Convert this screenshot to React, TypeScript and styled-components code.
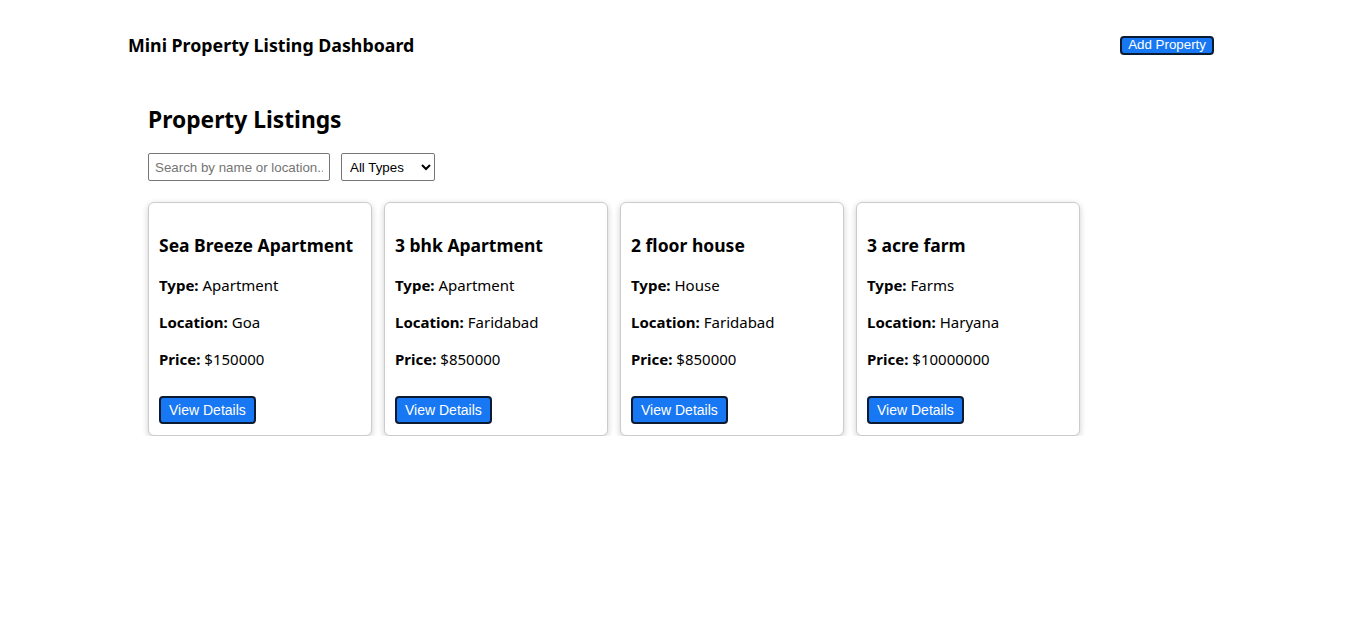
import React from 'react'
import styled, { createGlobalStyle } from 'styled-components'

const GlobalStyle = createGlobalStyle`
body {
    margin: 8px;
    background: #fff;
    color: #000;
    font-family: "Noto Sans", "Open Sans", sans-serif;
}
`

const properties = [
    { id: 1, name: 'Sea Breeze Apartment', type: 'Apartment', location: 'Goa', price: 150000 },
    { id: 2, name: '3 bhk Apartment', type: 'Apartment', location: 'Faridabad', price: 850000 },
    { id: 3, name: '2 floor house', type: 'House', location: 'Faridabad', price: 850000 },
    { id: 4, name: '3 acre farm', type: 'Farms', location: 'Haryana', price: 10000000 },
]

const App = () => {
    const [search, setSearch] = React.useState('')
    const [type, setType] = React.useState('')

    const list = properties.filter(p =>
        (p.name + ' ' + p.location).toLowerCase().includes(search.toLowerCase()) &&
        (type === '' || p.type === type)
    )

    return (
        <>
            <GlobalStyle />
            <Header>
                <Brand>Mini Property Listing Dashboard</Brand>
                <AddButton>Add Property</AddButton>
            </Header>

            <Main>
                <PageTitle>Property Listings</PageTitle>

                <Filters>
                    <SearchInput
                        placeholder="Search by name or location..."
                        value={search}
                        onChange={e => setSearch(e.target.value)}
                    />
                    <TypeSelect value={type} onChange={e => setType(e.target.value)}>
                        <option value="">All Types</option>
                        <option value="Apartment">Apartment</option>
                        <option value="House">House</option>
                        <option value="Farms">Farms</option>
                    </TypeSelect>
                </Filters>

                <CardList>
                    {list.map(p => (
                        <Card key={p.id}>
                            <CardTitle>{p.name}</CardTitle>
                            <Field><b>Type:</b> {p.type}</Field>
                            <Field><b>Location:</b> {p.location}</Field>
                            <Field><b>Price:</b> ${p.price}</Field>
                            <DetailsButton>View Details</DetailsButton>
                        </Card>
                    ))}
                </CardList>
            </Main>
        </>
    )
}
export default App

const Header = styled.header`
margin: 0 123px 0 120px;
padding: 23px 0 20px;
display: flex;
align-items: center;
justify-content: space-between;
`

const Brand = styled.h1`
margin: 0;
font-size: 17.8px;
font-weight: 700;
line-height: 28px;
`

const AddButton = styled.button`
background: #1877f2;
color: #fff;
border: 2px solid #0d1b30;
border-radius: 4px;
padding: 0 6px 2px;
font-family: "Liberation Sans", Arial, sans-serif;
font-size: 13.33px;
line-height: 13px;
cursor: pointer;
`

const Main = styled.main`
margin: 0 120px;
padding: 0 20px;
`

const PageTitle = styled.h2`
margin: 24px 0 17px;
font-size: 22.8px;
font-weight: 700;
line-height: 33px;
`

const Filters = styled.div`
display: flex;
gap: 11px;
margin-bottom: 21px;
`

const SearchInput = styled.input`
width: 182px;
height: 28px;
box-sizing: border-box;
padding: 4px 6px;
border: 1px solid #767676;
border-radius: 2px;
font-family: "Liberation Sans", Arial, sans-serif;
font-size: 13.33px;
&::placeholder {
    color: #757575;
}
`

const TypeSelect = styled.select`
width: 94px;
height: 28px;
box-sizing: border-box;
padding: 2px 4px;
border: 1px solid #767676;
border-radius: 2px;
background: #fff;
font-family: "Liberation Sans", Arial, sans-serif;
font-size: 13.33px;
`

const CardList = styled.div`
display: flex;
flex-wrap: wrap;
gap: 12px;
`

const Card = styled.div`
width: 224px;
box-sizing: border-box;
padding: 10px 10px 11px;
border: 1px solid #ccc;
border-radius: 6px;
background: #fff;
box-shadow: 0 2px 6px rgba(0, 0, 0, 0.2);
`

const CardTitle = styled.h3`
margin: 19.7px 0 17.7px;
font-size: 17.5px;
font-weight: 700;
line-height: 25px;
white-space: nowrap;
`

const Field = styled.p`
margin: 16px 0;
font-size: 15px;
line-height: 21px;
white-space: nowrap;
`

const DetailsButton = styled.button`
display: block;
margin-top: 26px;
height: 28px;
padding: 0 8px;
background: #1877f2;
color: #fff;
border: 2px solid #0d1b30;
border-radius: 4px;
font-family: "Liberation Sans", Arial, sans-serif;
font-size: 14px;
cursor: pointer;
`
